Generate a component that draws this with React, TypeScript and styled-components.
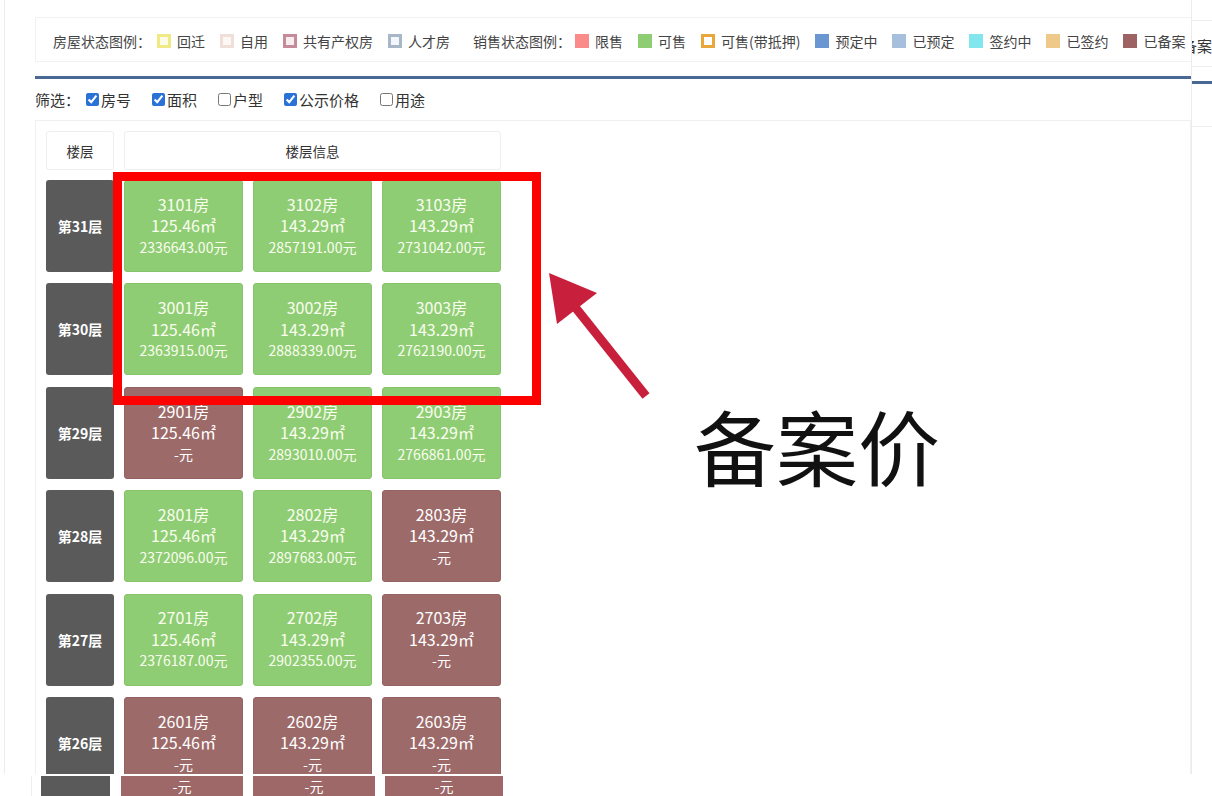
import React from 'react';
import styled, { createGlobalStyle } from 'styled-components';

type Status = 'sale' | 'filed';

interface Room {
  no: string;
  area: string;
  price: string;
  status: Status;
}

interface Floor {
  label: string;
  rooms: Room[];
}

const GREEN = '#8fcd74';
const BROWN = '#9d6a6a';
const FLOOR_GREY = '#5a5a5a';

const houseLegend = [
  { name: '回迁', fill: '#fbfbe6', border: '#efe986' },
  { name: '自用', fill: '#fcf8f6', border: '#efdfd8' },
  { name: '共有产权房', fill: '#f8eef0', border: '#c68b9b' },
  { name: '人才房', fill: '#f3f7fb', border: '#a7b7c8' },
];

const saleLegend = [
  { name: '限售', fill: '#f98b8b', border: '#f98b8b' },
  { name: '可售', fill: GREEN, border: GREEN },
  { name: '可售(带抵押)', fill: '#ffffff', border: '#e8a73a' },
  { name: '预定中', fill: '#6a97d1', border: '#6a97d1' },
  { name: '已预定', fill: '#a6bfdc', border: '#a6bfdc' },
  { name: '签约中', fill: '#82e6ee', border: '#82e6ee' },
  { name: '已签约', fill: '#efc98a', border: '#efc98a' },
  { name: '已备案', fill: '#9d6262', border: '#9d6262' },
];

const filters = [
  { name: '房号', checked: true },
  { name: '面积', checked: true },
  { name: '户型', checked: false },
  { name: '公示价格', checked: true },
  { name: '用途', checked: false },
];

const room = (no: string, area: string, price: string | null): Room => ({
  no,
  area,
  price: price ? `${price}元` : '-元',
  status: price ? 'sale' : 'filed',
});

const floors: Floor[] = [
  {
    label: '第31层',
    rooms: [
      room('3101', '125.46', '2336643.00'),
      room('3102', '143.29', '2857191.00'),
      room('3103', '143.29', '2731042.00'),
    ],
  },
  {
    label: '第30层',
    rooms: [
      room('3001', '125.46', '2363915.00'),
      room('3002', '143.29', '2888339.00'),
      room('3003', '143.29', '2762190.00'),
    ],
  },
  {
    label: '第29层',
    rooms: [
      room('2901', '125.46', null),
      room('2902', '143.29', '2893010.00'),
      room('2903', '143.29', '2766861.00'),
    ],
  },
  {
    label: '第28层',
    rooms: [
      room('2801', '125.46', '2372096.00'),
      room('2802', '143.29', '2897683.00'),
      room('2803', '143.29', null),
    ],
  },
  {
    label: '第27层',
    rooms: [
      room('2701', '125.46', '2376187.00'),
      room('2702', '143.29', '2902355.00'),
      room('2703', '143.29', null),
    ],
  },
  {
    label: '第26层',
    rooms: [
      room('2601', '125.46', null),
      room('2602', '143.29', null),
      room('2603', '143.29', null),
    ],
  },
];

const GlobalStyle = createGlobalStyle`
  html, body {
    margin: 0;
    padding: 0;
    background: #ffffff;
  }
  body {
    font-family: "Noto Sans CJK SC", "Noto Sans", "Liberation Sans", sans-serif;
    color: #333;
  }
  * {
    box-sizing: border-box;
  }
`;

const Frame = styled.div`
  position: relative;
  width: 1212px;
  height: 796px;
  overflow: hidden;
  background: #fff;
`;

const TopArea = styled.div`
  display: flex;
  height: 774px;
  overflow: hidden;
`;

const Gutter = styled.div`
  width: 5px;
  flex-shrink: 0;
  border-right: 1px solid #ececec;
`;

const Main = styled.div`
  width: 1186px;
  flex-shrink: 0;
  padding-left: 30px;
  overflow: hidden;
`;

const Legend = styled.div`
  margin-top: 17px;
  height: 45px;
  border: 1px solid #f1f1f1;
  border-right: none;
  display: flex;
  align-items: center;
  padding: 2px 0 0 17px;
  font-size: 14px;
  color: #444;
  white-space: nowrap;
`;

const LegendTitle = styled.span<{ $gap: number }>`
  margin-right: ${p => p.$gap}px;
`;

const LegendItem = styled.span`
  display: inline-flex;
  align-items: center;
  margin-right: 15px;
`;

const Swatch = styled.i<{ $fill: string; $border: string }>`
  display: inline-block;
  width: 14px;
  height: 14px;
  margin-right: 6px;
  background: ${p => p.$fill};
  border: 3px solid ${p => p.$border};
`;

const LegendDivider = styled.span`
  width: 1px;
  height: 30px;
  background: #efefef;
  margin: 0 10px 0 -2px;
`;

const BlueRule = styled.div`
  margin-top: 14px;
  height: 3px;
  background: #4a6896;
`;

const FilterBar = styled.div`
  height: 41px;
  display: flex;
  align-items: center;
  font-size: 15px;
  color: #333;
  white-space: nowrap;
`;

const FilterTitle = styled.span`
  margin-right: 6px;
`;

const FilterOption = styled.label`
  display: inline-flex;
  align-items: center;
  margin-right: 21px;
`;

const Check = styled.input`
  width: 13px;
  height: 13px;
  margin: 0 2px 0 0;
  accent-color: #2a72d6;
`;

const TableBox = styled.div`
  border: 1px solid #f0f0f0;
  padding: 10px;
  height: 700px;
`;

const GridRow = styled.div<{ $after: number }>`
  display: grid;
  grid-template-columns: 68px 119px 119px 119px;
  column-gap: 10px;
  margin-bottom: ${p => p.$after}px;
`;

const HeaderCell = styled.div<{ $span?: number }>`
  grid-column: span ${p => p.$span ?? 1};
  height: 39px;
  border: 1px solid #eeeeee;
  border-radius: 3px;
  display: flex;
  align-items: center;
  justify-content: center;
  font-size: 13.5px;
  color: #333;
`;

const FloorLabel = styled.div`
  height: 92px;
  border-radius: 3px;
  background: ${FLOOR_GREY};
  color: #fff;
  font-size: 14px;
  font-weight: 700;
  display: flex;
  align-items: center;
  justify-content: center;
`;

const RoomCell = styled.div<{ $status: Status }>`
  height: 92px;
  border-radius: 3px;
  background: ${p => (p.$status === 'sale' ? GREEN : BROWN)};
  border: 1px solid ${p => (p.$status === 'sale' ? '#86c36b' : '#946262')};
  color: ${p => (p.$status === 'sale' ? '#fafdf0' : '#ffffff')};
  display: flex;
  flex-direction: column;
  align-items: center;
  justify-content: center;
`;

const RoomLine = styled.div<{ $size: number }>`
  font-size: ${p => p.$size}px;
  line-height: 21.5px;
`;

const Side = styled.div`
  width: 21px;
  min-width: 0;
  flex-shrink: 0;
  overflow: hidden;
  border-left: 1px solid #ececec;
`;

const SideTab = styled.div`
  margin-top: 20px;
  height: 47px;
  border-top: 1px solid #eeeeee;
  border-bottom: 1px solid #eeeeee;
  display: flex;
  align-items: center;
  justify-content: flex-end;
  padding-top: 4px;
  overflow: hidden;
  white-space: nowrap;
  font-size: 15px;
  color: #333;
`;

const SideText = styled.span`
  flex-shrink: 0;
`;

const SideRule = styled.div`
  margin-top: 14px;
  height: 3px;
  background: #4a6896;
`;

const SideRow = styled.div`
  height: 43px;
  border-bottom: 1px solid #eeeeee;
`;

const BottomStrip = styled.div`
  margin-top: 2px;
  height: 20px;
  display: flex;
  padding-left: 31px;
`;

const StripEdge = styled.div`
  width: 10px;
  border-left: 1px solid #eeeeee;
`;

const StripFloor = styled.div`
  width: 69px;
  margin-right: 11px;
  background: ${FLOOR_GREY};
`;

const StripRoom = styled.div<{ $w: number }>`
  width: ${p => p.$w}px;
  margin-right: 10px;
  background: #9e6868;
  color: #fff;
  font-size: 14px;
  line-height: 20px;
  text-align: center;
`;

const RedBox = styled.div`
  position: absolute;
  left: 113px;
  top: 172px;
  width: 428px;
  height: 233px;
  border: 9px solid #ff0000;
`;

const ArrowSvg = styled.svg`
  position: absolute;
  left: 540px;
  top: 265px;
`;

const BigLabel = styled.div`
  position: absolute;
  left: 694px;
  top: 404px;
  font-size: 82px;
  line-height: 1;
  font-weight: 400;
  color: #111;
  white-space: nowrap;
`;

const App = () => {
  return (
    <>
      <GlobalStyle />
      <Frame>
        <TopArea>
          <Gutter />
          <Main>
            <Legend>
              <LegendTitle $gap={6}>房屋状态图例：</LegendTitle>
              {houseLegend.map(item => (
                <LegendItem key={item.name}>
                  <Swatch $fill={item.fill} $border={item.border} />
                  {item.name}
                </LegendItem>
              ))}
              <LegendDivider />
              <LegendTitle $gap={4}>销售状态图例：</LegendTitle>
              {saleLegend.map(item => (
                <LegendItem key={item.name}>
                  <Swatch $fill={item.fill} $border={item.border} />
                  {item.name}
                </LegendItem>
              ))}
            </Legend>
            <BlueRule />
            <FilterBar>
              <FilterTitle>筛选：</FilterTitle>
              {filters.map(f => (
                <FilterOption key={f.name}>
                  <Check type="checkbox" defaultChecked={f.checked} />
                  {f.name}
                </FilterOption>
              ))}
            </FilterBar>
            <TableBox>
              <GridRow $after={10}>
                <HeaderCell>楼层</HeaderCell>
                <HeaderCell $span={3}>楼层信息</HeaderCell>
              </GridRow>
              {floors.map(floor => (
                <GridRow key={floor.label} $after={11.4}>
                  <FloorLabel>{floor.label}</FloorLabel>
                  {floor.rooms.map(r => (
                    <RoomCell key={r.no} $status={r.status}>
                      <RoomLine $size={16}>{r.no}房</RoomLine>
                      <RoomLine $size={16}>{r.area}㎡</RoomLine>
                      <RoomLine $size={14}>{r.price}</RoomLine>
                    </RoomCell>
                  ))}
                </GridRow>
              ))}
            </TableBox>
          </Main>
          <Side>
            <SideTab>
              <SideText>备案</SideText>
            </SideTab>
            <SideRule />
            <SideRow />
          </Side>
        </TopArea>
        <BottomStrip>
          <StripEdge />
          <StripFloor />
          <StripRoom $w={122}>-元</StripRoom>
          <StripRoom $w={122}>-元</StripRoom>
          <StripRoom $w={118}>-元</StripRoom>
        </BottomStrip>

        <RedBox />
        <ArrowSvg width="115" height="140" viewBox="540 265 115 140">
          <line x1="575" y1="307" x2="646" y2="396" stroke="#c8203c" strokeWidth="9" />
          <polygon points="549,273 597,293 557,324" fill="#c8203c" />
        </ArrowSvg>
        <BigLabel>备案价</BigLabel>
      </Frame>
    </>
  );
};

export default App;
